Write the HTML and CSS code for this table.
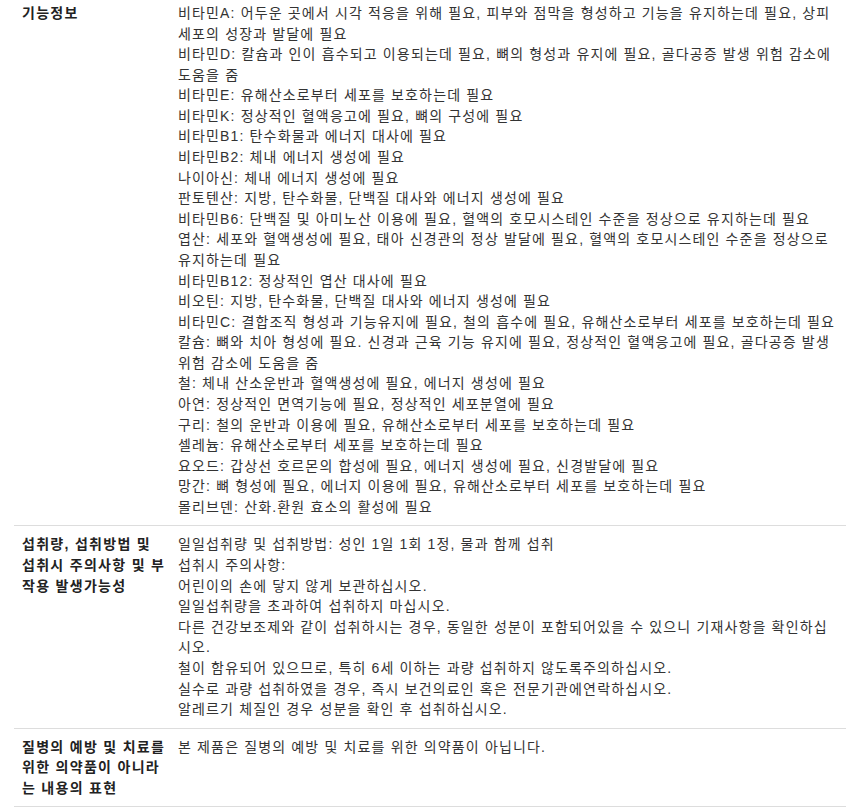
FILE: index.html
```html
<!DOCTYPE html>
<html lang="ko">
<head>
  <meta charset="UTF-8" />
  <meta name="viewport" content="width=device-width, initial-scale=1.0"/>
  <title>상품정보</title>
  <link rel="stylesheet" href="styles.css">
</head>
<body>

  <!-- 상품 상세 정보 -->
  <table class="info-table">
    <tr>
      <th>기능정보</th>
      <td>
        비타민A: 어두운 곳에서 시각 적응을 위해 필요, 피부와 점막을 형성하고 기능을 유지하는데 필요, 상피세포의 성장과 발달에 필요<br>
        비타민D: 칼슘과 인이 흡수되고 이용되는데 필요, 뼈의 형성과 유지에 필요, 골다공증 발생 위험 감소에 도움을 줌<br>
        비타민E: 유해산소로부터 세포를 보호하는데 필요<br>
        비타민K: 정상적인 혈액응고에 필요, 뼈의 구성에 필요<br>
        비타민B1: 탄수화물과 에너지 대사에 필요<br>
        비타민B2: 체내 에너지 생성에 필요<br>
        나이아신: 체내 에너지 생성에 필요<br>
        판토텐산: 지방, 탄수화물, 단백질 대사와 에너지 생성에 필요<br>
        비타민B6: 단백질 및 아미노산 이용에 필요, 혈액의 호모시스테인 수준을 정상으로 유지하는데 필요<br>
        엽산: 세포와 혈액생성에 필요, 태아 신경관의 정상 발달에 필요, 혈액의 호모시스테인 수준을 정상으로 유지하는데 필요<br>
        비타민B12: 정상적인 엽산 대사에 필요<br>
        비오틴: 지방, 탄수화물, 단백질 대사와 에너지 생성에 필요<br>
        비타민C: 결합조직 형성과 기능유지에 필요, 철의 흡수에 필요, 유해산소로부터 세포를 보호하는데 필요<br>
        칼슘: 뼈와 치아 형성에 필요. 신경과 근육 기능 유지에 필요, 정상적인 혈액응고에 필요, 골다공증 발생 위험 감소에 도움을 줌<br>
        철: 체내 산소운반과 혈액생성에 필요, 에너지 생성에 필요<br>
        아연: 정상적인 면역기능에 필요, 정상적인 세포분열에 필요<br>
        구리: 철의 운반과 이용에 필요, 유해산소로부터 세포를 보호하는데 필요<br>
        셀레늄: 유해산소로부터 세포를 보호하는데 필요<br>
        요오드: 갑상선 호르몬의 합성에 필요, 에너지 생성에 필요, 신경발달에 필요<br>
        망간: 뼈 형성에 필요, 에너지 이용에 필요, 유해산소로부터 세포를 보호하는데 필요<br>
        몰리브덴: 산화.환원 효소의 활성에 필요
      </td>
    </tr>
    <tr>
      <th>섭취량, 섭취방법 및 섭취시 주의사항 및 부작용 발생가능성</th>
      <td>
        일일섭취량 및 섭취방법: 성인 1일 1회 1정, 물과 함께 섭취<br>
        섭취시 주의사항:<br>
        어린이의 손에 닿지 않게 보관하십시오.<br>
        일일섭취량을 초과하여 섭취하지 마십시오.<br>
        다른 건강보조제와 같이 섭취하시는 경우, 동일한 성분이 포함되어있을 수 있으니 기재사항을 확인하십시오.<br>
        철이 함유되어 있으므로, 특히 6세 이하는 과량 섭취하지 않도록주의하십시오.<br>
        실수로 과량 섭취하였을 경우, 즉시 보건의료인 혹은 전문기관에연락하십시오.<br>
        알레르기 체질인 경우 성분을 확인 후 섭취하십시오.
      </td>
    </tr>
    <tr>
      <th>질병의 예방 및 치료를 위한 의약품이 아니라는 내용의 표현</th>
      <td>본 제품은 질병의 예방 및 치료를 위한 의약품이 아닙니다.</td>
    </tr>
  </table>

</body>
</html>
```

FILE: styles.css
```css
body {
  font-family: "Liberation Sans", "Noto Sans CJK KR", sans-serif;
  font-size: 14px;
  line-height: 1.47;
  letter-spacing: 1.15px;
  color: #333;
  background: #fff;
  margin: 0;
  padding: 0 14px;
}

.info-table {
  width: 100%;
  border-collapse: collapse;
  margin-top: -5px;
}

.info-table th,
.info-table td {
  padding: 8px;
  vertical-align: top;
  text-align: left;
  border-bottom: 1px solid #ddd;
}

.info-table th {
  width: 146px;
  padding-right: 2px;
  font-weight: bold;
  letter-spacing: 1.3px;
  color: #222;
}
```
